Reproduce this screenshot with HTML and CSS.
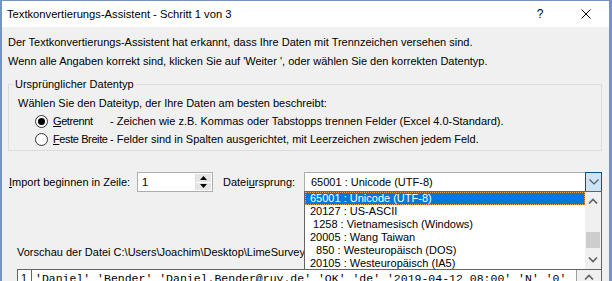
FILE: index.html
```html
<!DOCTYPE html>
<html lang="de">
<head>
    <meta charset="UTF-8">
    <title>Textkonvertierungs-Assistent</title>
    <link rel="stylesheet" href="styles.css">
</head>
<body>
    <div class="window">
        <div class="titlebar">
            <span class="title">Textkonvertierungs-Assistent - Schritt 1 von 3</span>
            <span class="cap-btn">?</span>
            <span class="cap-btn">
                <svg width="10" height="10" viewBox="0 0 10 10"><path d="M0.5 0.5 L9.5 9.5 M9.5 0.5 L0.5 9.5" stroke="#000" stroke-width="1" fill="none"/></svg>
            </span>
        </div>

        <div class="content">
            <p class="intro">Der Textkonvertierungs-Assistent hat erkannt, dass Ihre Daten mit Trennzeichen versehen sind.</p>
            <p class="intro">Wenn alle Angaben korrekt sind, klicken Sie auf 'Weiter ', oder wählen Sie den korrekten Datentyp.</p>

            <fieldset class="group">
                <legend>Ursprünglicher Datentyp</legend>
                <p class="group-text">Wählen Sie den Dateityp, der Ihre Daten am besten beschreibt:</p>
                <div class="radio-row">
                    <span class="radio checked"></span>
                    <span class="radio-label"><u>G</u>etrennt</span>
                    <span class="radio-desc">- Zeichen wie z.B. Kommas oder Tabstopps trennen Felder (Excel 4.0-Standard).</span>
                </div>
                <div class="radio-row">
                    <span class="radio"></span>
                    <span class="radio-label"><u>F</u>este Breite</span>
                    <span class="radio-desc">- Felder sind in Spalten ausgerichtet, mit Leerzeichen zwischen jedem Feld.</span>
                </div>
            </fieldset>

            <div class="import-row">
                <span class="field-label"><u>I</u>mport beginnen in Zeile:</span>
                <div class="spin-box">
                    <span class="spin-value">1</span>
                    <div class="spin-buttons">
                        <span class="spin-btn"><svg width="7" height="4" viewBox="0 0 7 4"><path d="M3.5 0 L7 4 L0 4 Z" fill="#000"/></svg></span>
                        <span class="spin-btn"><svg width="7" height="4" viewBox="0 0 7 4"><path d="M0 0 L7 0 L3.5 4 Z" fill="#000"/></svg></span>
                    </div>
                </div>
                <span class="field-label origin-label">Datei<u>u</u>rsprung:</span>
                <div class="combo">
                    <span class="combo-value">65001 : Unicode (UTF-8)</span>
                    <span class="combo-btn">
                        <svg width="10" height="6" viewBox="0 0 10 6"><path d="M0.5 0.5 L5 5 L9.5 0.5" stroke="#5a5a5a" stroke-width="1.2" fill="none"/></svg>
                    </span>
                </div>
            </div>

            <p class="preview-label">Vorschau der Datei C:\Users\Joachim\Desktop\LimeSurvey\survey_export.csv.</p>

            <div class="preview">
                <div class="preview-rows">
                    <div class="preview-row">
                        <span class="row-num">1</span>
                        <span class="row-data">'Daniel' 'Bender' 'Daniel.Bender@ruv.de' 'OK' 'de' '2019-04-12 08:00' 'N' '0'</span>
                    </div>
                </div>
                <div class="preview-scroll">
                    <svg width="10" height="6" viewBox="0 0 10 6"><path d="M1 5.5 L5 1.5 L9 5.5" stroke="#606060" stroke-width="1.6" fill="none"/></svg>
                </div>
            </div>
        </div>

        <div class="dropdown-list">
            <ul class="options">
                <li class="option selected">65001 : Unicode (UTF-8)</li>
                <li class="option">20127 : US-ASCII</li>
                <li class="option"> 1258 : Vietnamesisch (Windows)</li>
                <li class="option">20005 : Wang Taiwan</li>
                <li class="option">  850 : Westeuropäisch (DOS)</li>
                <li class="option">20105 : Westeuropäisch (IA5)</li>
            </ul>
            <div class="list-scroll">
                <svg class="arrow" width="10" height="6" viewBox="0 0 10 6"><path d="M1 5.5 L5 1.5 L9 5.5" stroke="#606060" stroke-width="1.6" fill="none"/></svg>
                <span class="thumb"></span>
                <svg class="arrow" width="10" height="6" viewBox="0 0 10 6"><path d="M1 0.5 L5 4.5 L9 0.5" stroke="#606060" stroke-width="1.6" fill="none"/></svg>
            </div>
        </div>
    </div>
</body>
</html>
```

FILE: styles.css
```css
body {
    margin: 0;
    font-family: "Liberation Sans", Arial, sans-serif;
    font-size: 11px;
    color: #000;
    background-color: #f0f0f0;
}

p {
    margin: 0;
}

.window {
    position: relative;
    height: 280px;
    overflow: hidden;
    background-color: #f0f0f0;
    border-top: 1px solid #7593c3;
    border-left: 2px solid #7593c3;
    border-right: 3px solid #7593c3;
}

/* title bar */
.titlebar {
    display: flex;
    align-items: center;
    height: 26px;
    background-color: #fff;
}

.title {
    flex: 1;
    padding-left: 5px;
    font-size: 11.2px;
}

.cap-btn {
    width: 46px;
    display: flex;
    justify-content: center;
    align-items: center;
    font-size: 12px;
}

/* main content */
.content {
    padding: 6px 7px 0 6px;
    white-space: nowrap;
}

.intro {
    line-height: 19px;
}

.group {
    margin: 5px 0 0;
    padding: 0 9px 2px;
    border: 1px solid #dcdcdc;
}

.group legend {
    margin-left: -5px;
    padding: 0 2px;
    line-height: 16px;
}

.group-text {
    margin-top: 2px;
    line-height: 18px;
}

.radio-row {
    display: flex;
    align-items: center;
    height: 18px;
    padding-left: 17px;
}

.radio {
    flex-shrink: 0;
    width: 11px;
    height: 11px;
    border: 1px solid #333;
    border-radius: 50%;
    background-color: #fff;
    margin-right: 5px;
    display: flex;
    align-items: center;
    justify-content: center;
}

.radio.checked::after {
    content: "";
    width: 7px;
    height: 7px;
    border-radius: 50%;
    background-color: #000;
}

.radio-label {
    flex-shrink: 0;
    width: 57px;
    letter-spacing: -0.4px;
}

/* import row */
.import-row {
    display: flex;
    align-items: center;
    margin-top: 21px;
    height: 20px;
}

.field-label {
    flex-shrink: 0;
    padding-left: 1px;
    width: 128px;
}

.origin-label {
    width: 81px;
    margin-left: 9px;
}

.spin-box {
    display: flex;
    width: 74px;
    height: 18px;
    border: 1px solid #adadad;
    background-color: #fff;
}

.spin-value {
    flex: 1;
    padding-left: 4px;
    line-height: 18px;
}

.spin-buttons {
    display: flex;
    flex-direction: column;
    width: 15px;
    margin: 1px;
    border-left: 1px solid #e0e0e0;
}

.spin-btn {
    flex: 1;
    display: flex;
    align-items: center;
    justify-content: center;
    background-color: #e5e5e5;
}

.spin-btn + .spin-btn {
    border-top: 1px solid #fff;
}

.combo {
    display: flex;
    width: 296px;
    height: 18px;
    border: 1px solid #adadad;
    background-color: #fff;
}

.combo-value {
    flex: 1;
    padding-left: 6px;
    line-height: 18px;
}

.combo-btn {
    width: 15px;
    display: flex;
    align-items: center;
    justify-content: center;
    background-color: #cce4f7;
    border: 1px solid #005499;
    margin: -1px -1px -1px 0;
}

/* preview */
.preview-label {
    width: 287px;
    overflow: hidden;
    margin-top: 51px;
    line-height: 18px;
    padding-left: 9px;
}

.preview {
    display: flex;
    margin: 8px 0 0 9px;
    height: 30px;
    border: 1px solid #646464;
    background-color: #fff;
}

.preview-rows {
    flex: 1;
    overflow: hidden;
    border-right: 1px solid #a0a0a0;
}

.preview-row {
    display: flex;
    height: 16px;
    align-items: center;
}

.row-num {
    width: 10px;
    padding-left: 3px;
    border-right: 1px solid #646464;
    line-height: 16px;
}

.row-data {
    padding-left: 3px;
    font-family: "Liberation Mono", monospace;
    font-size: 11.5px;
    white-space: pre;
}

.preview-scroll {
    width: 24px;
    display: flex;
    justify-content: center;
    padding-top: 4px;
    background-color: #f0f0f0;
}

/* open drop-down list of the combo */
.dropdown-list {
    position: absolute;
    left: 302px;
    top: 190px;
    width: 296px;
    height: 77px;
    display: flex;
    border: 1px solid #646464;
    background-color: #fff;
}

.options {
    flex: 1;
    margin: 0;
    padding: 0;
    list-style: none;
}

.option {
    height: 13px;
    line-height: 13px;
    padding-left: 5px;
    white-space: pre;
}

.option.selected {
    background-color: #0078d7;
    color: #fff;
    outline: 1px dotted #f0a050;
    outline-offset: -1px;
}

.list-scroll {
    width: 16px;
    display: flex;
    flex-direction: column;
    align-items: center;
    background-color: #f0f0f0;
}

.list-scroll .arrow {
    margin: 6px 0 0;
}

.list-scroll .thumb {
    width: 14px;
    height: 16px;
    margin-top: 28px;
    background-color: #cdcdcd;
}

.list-scroll .arrow:last-child {
    margin-top: 9px;
}
```
